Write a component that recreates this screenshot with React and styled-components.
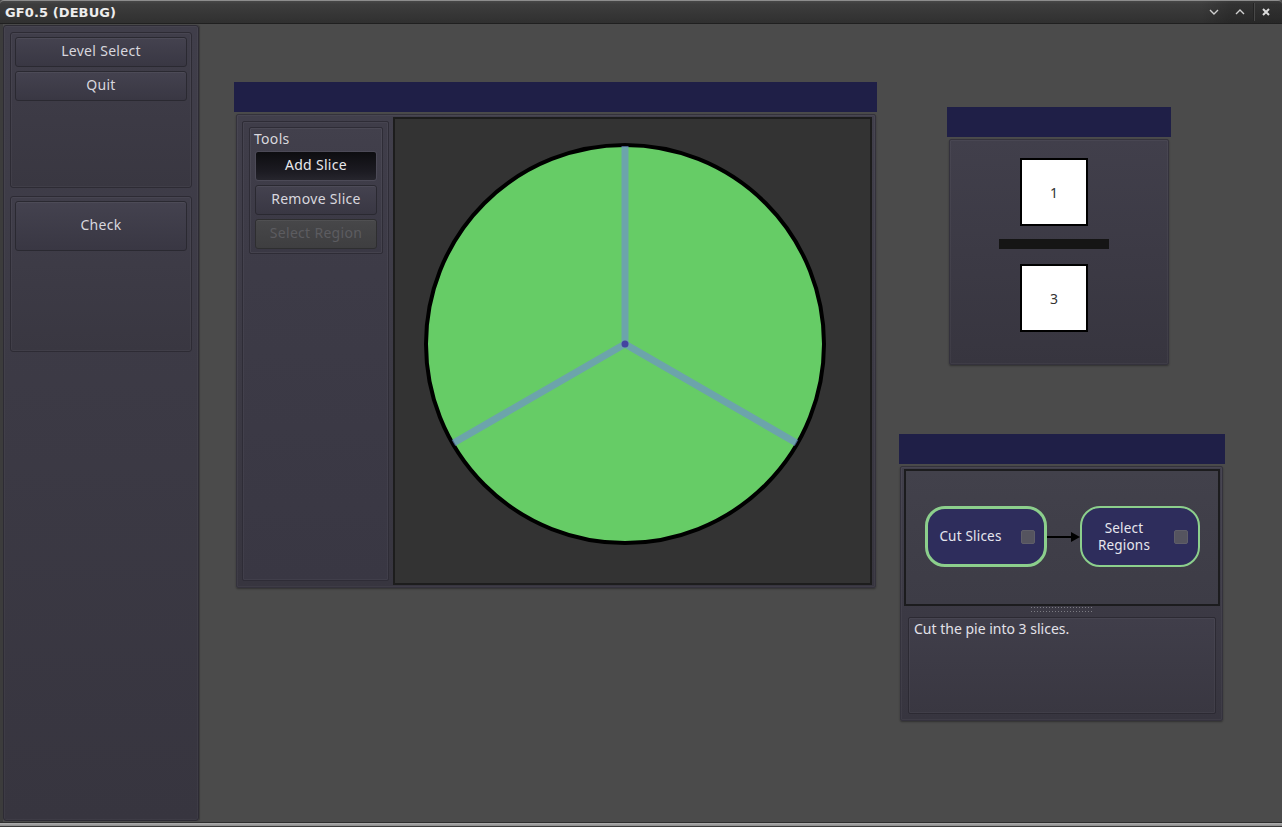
import React from 'react';
import styled, { createGlobalStyle } from 'styled-components';

const Global = createGlobalStyle`
  html, body { margin: 0; padding: 0; background: #2a2a2a; overflow: hidden; }
  #root { width: 1282px; height: 827px; }
  * { box-sizing: border-box; }
`;

const Frame = styled.div`
  width: 1282px;
  height: 827px;
  display: flex;
  flex-direction: column;
  background: #4b4b4b;
  font-family: "Noto Sans", "Open Sans", sans-serif;
  font-size: 14px;
  color: #dedde4;
`;

const TitleBar = styled.div`
  height: 24px;
  flex: none;
  display: flex;
  align-items: center;
  background: linear-gradient(#484848 0, #3d3d3d 3px, #303030 100%);
  border-top: 1px solid #8c8c8c;
  border-bottom: 1px solid #202020;
  border-radius: 4px 4px 0 0;
`;

const TitleText = styled.div`
  flex: 1;
  padding-left: 5px;
  font-family: "DejaVu Sans", sans-serif;
  font-weight: bold;
  font-size: 13px;
  color: #ededed;
  letter-spacing: 0.1px;
`;

const Controls = styled.div`
  display: flex;
  align-items: center;
  height: 100%;
  padding-right: 4px;
  background: linear-gradient(90deg, rgba(0,0,0,0) 0, rgba(0,0,0,0.18) 30px);
`;

const CtrlButton = styled.div`
  width: ${p => p.$w || 26}px;
  height: 100%;
  display: flex;
  align-items: center;
  justify-content: center;
`;

const CtrlSep = styled.div`
  width: 1px;
  height: 18px;
  background: #232323;
  box-shadow: 1px 0 0 #484848;
`;

const Body = styled.div`
  flex: 1;
  min-height: 0;
  display: flex;
  padding: 1px 0 1px 0;
  border-left: 3px solid #3c3c3c;
`;

const Sidebar = styled.div`
  width: 196px;
  flex: none;
  display: flex;
  flex-direction: column;
  gap: 8px;
  padding: 6px;
  border: 1px solid #2d2b34;
  border-radius: 3px;
  background: linear-gradient(#403e4a, #37353f);
  box-shadow: inset 0 0 0 1px rgba(255,255,255,0.03), 1px 0 1px rgba(0,0,0,0.25);
`;

const SubPanel = styled.div`
  height: 156px;
  display: flex;
  flex-direction: column;
  gap: 4px;
  padding: 4px;
  border: 1px solid #2d2b34;
  border-radius: 3px;
  background: linear-gradient(#403e4a, #393741);
  box-shadow: inset 0 0 0 1px rgba(255,255,255,0.04);
`;

const Button = styled.div`
  height: ${p => p.$h || 30}px;
  flex: none;
  display: flex;
  align-items: center;
  justify-content: center;
  padding-bottom: 3px;
  border-radius: 3px;
  border: 1px solid ${p => (p.$pressed ? '#4c4a57' : p.$disabled ? '#2e2e30' : '#2a2931')};
  background: ${p =>
    p.$pressed
      ? 'linear-gradient(#0d0d10, #1c1b22 70%, #26252d)'
      : p.$disabled
      ? 'linear-gradient(#474749, #3e3e40)'
      : 'linear-gradient(#44424f, #393743)'};
  box-shadow: ${p => (p.$pressed ? 'none' : 'inset 0 1px 0 rgba(255,255,255,0.05)')};
  color: ${p => (p.$disabled ? '#5c5c60' : p.$pressed ? '#e8e8ec' : '#d8d7de')};
  font-size: 14px;
  letter-spacing: 0.3px;
`;

const Content = styled.div`
  flex: 1;
  position: relative;
  margin-left: 1px;
`;

const Window = styled.div`
  position: absolute;
  left: ${p => p.$x}px;
  top: ${p => p.$y}px;
  width: ${p => p.$w}px;
  display: flex;
  flex-direction: column;
`;

const WinTitle = styled.div`
  height: 30px;
  background: #1f1f47;
`;

const WinBody = styled.div`
  margin: 2px ${p => p.$mr}px 0 ${p => p.$ml}px;
  height: ${p => p.$h}px;
  border: 1px solid #34323c;
  border-radius: 2px;
  background: linear-gradient(#413f4b, #37353f);
  box-shadow: inset 0 0 0 1px rgba(255,255,255,0.04), 0 1px 2px rgba(0,0,0,0.35);
  display: flex;
  flex-direction: ${p => p.$dir || 'row'};
  padding: ${p => p.$pad};
  gap: ${p => p.$gap || 0}px;
`;

const ToolColumn = styled.div`
  width: 147px;
  flex: none;
  margin: 4px 0;
  padding: 5px 5px 0 6px;
  border: 1px solid #2e2c36;
  border-radius: 2px;
  background: linear-gradient(#3f3d49, #393743);
  box-shadow: inset 0 0 0 1px rgba(255,255,255,0.04);
`;

const ToolGroup = styled.div`
  display: flex;
  flex-direction: column;
  gap: 4px;
  padding: 1px 5px 4px 5px;
  border: 1px solid #2e2c36;
  border-radius: 2px;
  background: linear-gradient(#42404c, #3a3844);
  box-shadow: inset 0 0 0 1px rgba(255,255,255,0.05);
`;

const GroupLabel = styled.div`
  height: 19px;
  line-height: 19px;
  margin-left: -1px;
  margin-bottom: -1px;
  color: #d9d8de;
  font-size: 14px;
  letter-spacing: 0.3px;
`;

const Canvas = styled.div`
  flex: 1;
  border: 2px solid #1d1d1d;
  background: #333333;
  display: flex;
`;

const PieSvg = styled.svg`
  width: 100%;
  height: 100%;
  display: block;
`;

const FractionBody = styled.div`
  flex: 1;
  display: flex;
  flex-direction: column;
  align-items: center;
  padding: 18px 10px 0 0;
`;

const NumBox = styled.div`
  width: 68px;
  height: 68px;
  flex: none;
  background: #fff;
  border: 2px solid #000;
  display: flex;
  align-items: center;
  justify-content: center;
  color: #333;
  font-size: 14px;
`;

const FracBar = styled.div`
  width: 110px;
  height: 10px;
  background: #151515;
  margin: 13px 0 15px;
`;

const GraphArea = styled.div`
  height: 137px;
  flex: none;
  border: 2px solid #1c1c1e;
  background: linear-gradient(#42414b, #3d3c46);
  display: flex;
  align-items: center;
  justify-content: center;
  padding-bottom: 2px;
`;

const Node = styled.div`
  width: ${p => p.$w}px;
  height: 61px;
  flex: none;
  display: flex;
  align-items: center;
  border: ${p => p.$bw}px solid #8ccf8c;
  border-radius: 20px;
  background: #2e2d5c;
  padding: 0 ${p => 10 - (p.$bw - 2)}px 0 ${p => 10 - p.$bw + 3}px;
  color: #e6e6ee;
  font-size: 13.5px;
  letter-spacing: 0.2px;
`;

const NodeText = styled.div`
  flex: 1;
  text-align: center;
  line-height: 17px;
  padding-right: ${p => p.$pr || 0}px;
`;

const NodeCheck = styled.div`
  width: 14px;
  height: 14px;
  flex: none;
  border-radius: 2px;
  background: #55545f;
  border: 1px solid #5f5e69;
`;

const Arrow = styled.svg`
  width: 33px;
  height: 14px;
  flex: none;
  display: block;
`;

const Splitter = styled.div`
  height: 11px;
  flex: none;
  display: flex;
  flex-direction: column;
  align-items: center;
  padding-top: 1px;
  gap: 3px;
`;

const GripRow = styled.div`
  width: 62px;
  height: 1px;
  background: repeating-linear-gradient(90deg, #7b7b82 0 1px, transparent 1px 3px);
`;

const TextArea = styled.div`
  flex: 1;
  margin: 0 4px 4px 4px;
  border: 1px solid #2c2a33;
  border-radius: 2px;
  background: linear-gradient(#403e4a, #393741);
  box-shadow: inset 0 0 0 1px rgba(255,255,255,0.04);
  padding: 1px 5px;
  line-height: 20px;
  color: #e2e1e8;
  font-size: 14px;
`;

const BottomFrame = styled.div`
  height: 5px;
  flex: none;
  border-top: 1px solid #2e2e2e;
  border-bottom: 1px solid #3a3a3a;
  background: linear-gradient(#b0b0b0, #8a8a8a);
`;

const cx = 230;
const cy = 225;
const r = 199;
const len = 198;
const ends = [90, 210, 330].map(a => {
  const rad = (a * Math.PI) / 180;
  return [cx + len * Math.cos(rad), cy - len * Math.sin(rad)];
});

export default function App() {
  return (
    <Frame>
      <Global />
      <TitleBar>
        <TitleText>GF0.5 (DEBUG)</TitleText>
        <Controls>
          <CtrlButton>
            <svg width="10" height="6" viewBox="0 0 10 6">
              <polyline points="1,1 5,5 9,1" fill="none" stroke="#cfcfcf" strokeWidth="1.4" />
            </svg>
          </CtrlButton>
          <CtrlButton>
            <svg width="10" height="6" viewBox="0 0 10 6">
              <polyline points="1,5 5,1 9,5" fill="none" stroke="#cfcfcf" strokeWidth="1.4" />
            </svg>
          </CtrlButton>
          <CtrlSep />
          <CtrlButton $w={24}>
            <svg width="8" height="8" viewBox="0 0 8 8">
              <path d="M1 1 L7 7 M7 1 L1 7" stroke="#dcdcdc" strokeWidth="2" />
            </svg>
          </CtrlButton>
        </Controls>
      </TitleBar>
      <Body>
        <Sidebar>
          <SubPanel>
            <Button>Level Select</Button>
            <Button>Quit</Button>
          </SubPanel>
          <SubPanel>
            <Button $h={50}>Check</Button>
          </SubPanel>
        </Sidebar>
        <Content>
          <Window $x={34} $y={57} $w={643}>
            <WinTitle />
            <WinBody $ml={2} $mr={1} $h={474} $pad="2px 3px 2px 5px" $gap={4}>
              <ToolColumn>
                <ToolGroup>
                  <GroupLabel>Tools</GroupLabel>
                  <Button $pressed>Add Slice</Button>
                  <Button>Remove Slice</Button>
                  <Button $disabled>Select Region</Button>
                </ToolGroup>
              </ToolColumn>
              <Canvas>
                <PieSvg viewBox="0 0 475 464">
                  <circle cx={cx} cy={cy} r={r} fill="#66cc66" stroke="#000" strokeWidth="4" />
                  <g opacity="0.65" stroke="#7090d0" strokeWidth="7">
                    {ends.map(([x, y], i) => (
                      <line key={i} x1={cx} y1={cy} x2={x} y2={y} />
                    ))}
                  </g>
                  <circle cx={cx} cy={cy} r="3.5" fill="#4444a0" />
                </PieSvg>
              </Canvas>
            </WinBody>
          </Window>

          <Window $x={747} $y={82} $w={224}>
            <WinTitle />
            <WinBody $ml={2} $mr={2} $h={226} $pad="0">
              <FractionBody>
                <NumBox>1</NumBox>
                <FracBar />
                <NumBox>3</NumBox>
              </FractionBody>
            </WinBody>
          </Window>

          <Window $x={699} $y={409} $w={326}>
            <WinTitle />
            <WinBody $ml={1} $mr={2} $h={255} $dir="column" $pad="2px 2px 2px 3px">
              <GraphArea>
                <Node $w={122} $bw={3}>
                  <NodeText $pr={17}>Cut Slices</NodeText>
                  <NodeCheck />
                </Node>
                <Arrow viewBox="0 0 33 14">
                  <line x1="0" y1="7" x2="25" y2="7" stroke="#000" strokeWidth="2" />
                  <polygon points="24,2 33,7 24,12" fill="#000" />
                </Arrow>
                <Node $w={120} $bw={2}>
                  <NodeText $pr={18}>
                    Select
                    <br />
                    Regions
                  </NodeText>
                  <NodeCheck />
                </Node>
              </GraphArea>
              <Splitter>
                <GripRow />
                <GripRow />
              </Splitter>
              <TextArea>Cut the pie into 3 slices.</TextArea>
            </WinBody>
          </Window>
        </Content>
      </Body>
      <BottomFrame />
    </Frame>
  );
}
